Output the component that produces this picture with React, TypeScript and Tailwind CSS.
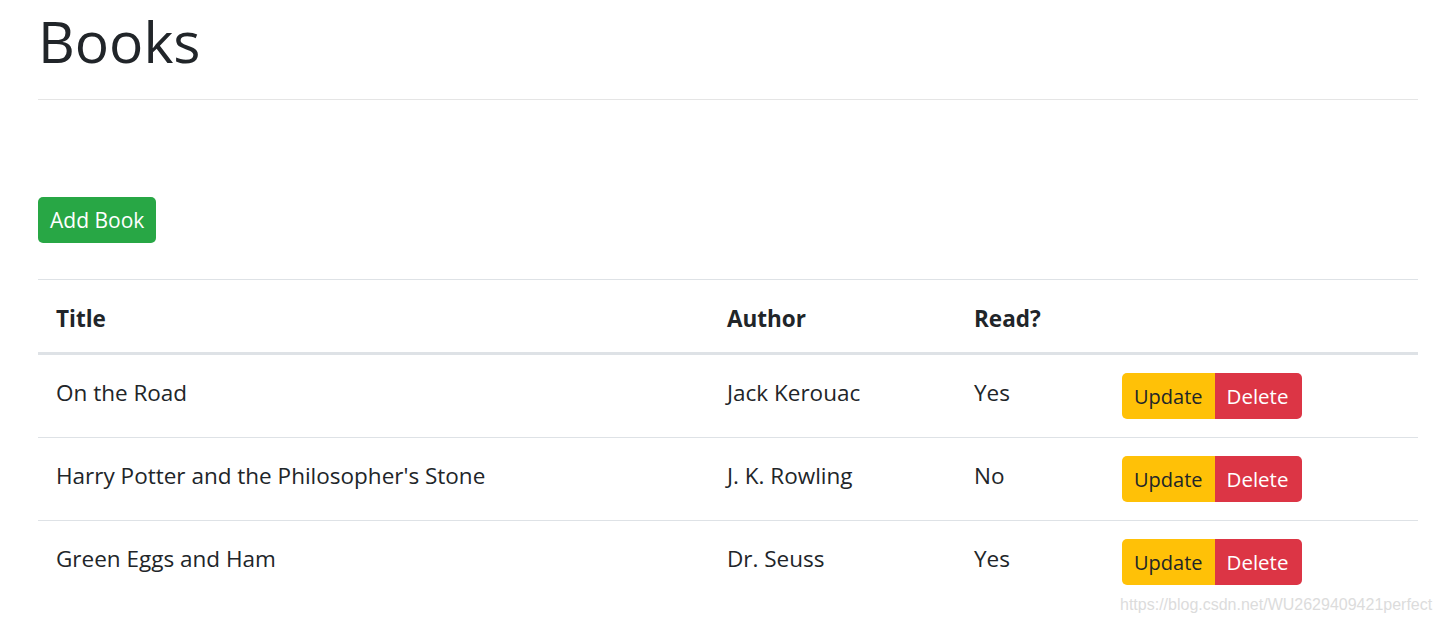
import React from "react";

interface Book {
  title: string;
  author: string;
  read: boolean;
}

const books: Book[] = [
  { title: "On the Road", author: "Jack Kerouac", read: true },
  { title: "Harry Potter and the Philosopher's Stone", author: "J. K. Rowling", read: false },
  { title: "Green Eggs and Ham", author: "Dr. Seuss", read: true },
];

export default function App() {
  return (
    <div className="relative min-h-screen bg-white font-['Open_Sans','Noto_Sans',sans-serif] text-[#212529]">
      <div className="pl-[38px] pr-[21px]">
        {/* Heading */}
        <h1 className="pt-[6px] text-[57px] font-medium leading-[70px]">Books</h1>
        <hr className="mt-[23px] border-0 border-t border-[#e5e5e5]" />

        {/* Add */}
        <div className="mt-[97px]">
          <button
            type="button"
            className="h-[46px] rounded-[5px] bg-[#28a745] px-[12px] text-[21px] leading-[31px] text-white"
          >
            Add Book
          </button>
        </div>

        {/* Table */}
        <table className="mt-[36px] w-full border-collapse text-[22.5px] leading-[36px]">
          <thead>
            <tr className="border-t border-[#dee2e6]">
              <th className="w-[671px] border-b-[3px] border-[#dee2e6] px-[18px] pt-[21px] pb-[15px] text-left font-bold">Title</th>
              <th className="w-[247px] border-b-[3px] border-[#dee2e6] px-[18px] pt-[21px] pb-[15px] text-left font-bold">Author</th>
              <th className="w-[148px] border-b-[3px] border-[#dee2e6] px-[18px] pt-[21px] pb-[15px] text-left font-bold">Read?</th>
              <th className="border-b-[3px] border-[#dee2e6] p-[18px]"></th>
            </tr>
          </thead>
          <tbody>
            {books.map((b, i) => (
              <tr key={b.title} className={i > 0 ? "border-t border-[#dee2e6]" : ""}>
                <td className="px-[18px] pt-[20px] pb-[16px] align-top">{b.title}</td>
                <td className="px-[18px] pt-[20px] pb-[16px] align-top">{b.author}</td>
                <td className="px-[18px] pt-[20px] pb-[16px] align-top">{b.read ? "Yes" : "No"}</td>
                <td className="p-[18px] align-top">
                  <div className="flex">
                    <button
                      type="button"
                      className="h-[46px] rounded-l-[5px] bg-[#ffc107] px-[12px] text-[20px] leading-[31px] text-[#212529]"
                    >
                      Update
                    </button>
                    <button
                      type="button"
                      className="h-[46px] rounded-r-[5px] bg-[#dc3545] pl-[12px] pr-[14px] text-[20.5px] leading-[31px] text-white"
                    >
                      Delete
                    </button>
                  </div>
                </td>
              </tr>
            ))}
          </tbody>
        </table>
      </div>

      {/* watermark */}
      <div className="absolute left-[1120px] top-[594px] font-['Liberation_Sans',Arial,sans-serif] text-[16px] leading-[22px] text-[#dcdcdc]">
        https://blog.csdn.net/WU2629409421perfect
      </div>
    </div>
  );
}
